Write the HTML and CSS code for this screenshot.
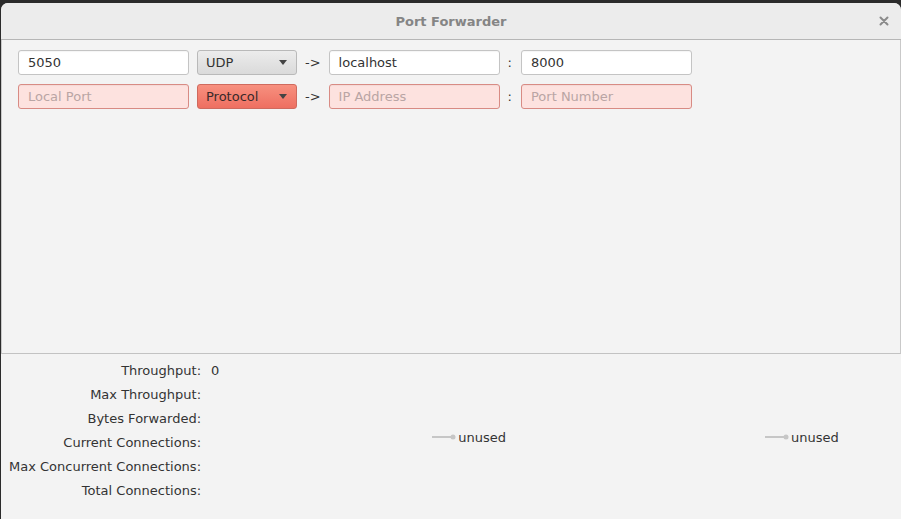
FILE: index.html
```html
<!DOCTYPE html>
<html>
<head>
<meta charset="utf-8">
<link rel="stylesheet" href="styles.css">
</head>
<body>
<div class="window">
  <div class="titlebar">
    <div></div>
    <div class="title">Port Forwarder</div>
    <div class="close-wrap">
      <svg class="close" width="10" height="10" viewBox="0 0 10 10"><path d="M1.5 1.5 L8.5 8.5 M8.5 1.5 L1.5 8.5" stroke="#8a8a8a" stroke-width="2" stroke-linecap="round"/></svg>
    </div>
  </div>
  <div class="panel">
    <div class="row">
      <div class="field">5050</div>
      <div class="combo"><span>UDP</span><span class="arrow"></span></div>
      <div class="sep">-&gt;</div>
      <div class="field">localhost</div>
      <div class="sep colon">:</div>
      <div class="field">8000</div>
    </div>
    <div class="row">
      <div class="field error placeholder">Local Port</div>
      <div class="combo combo-error"><span>Protocol</span><span class="arrow"></span></div>
      <div class="sep">-&gt;</div>
      <div class="field error placeholder">IP Address</div>
      <div class="sep colon">:</div>
      <div class="field error placeholder">Port Number</div>
    </div>
  </div>
  <div class="bottom">
    <div class="stats">
      <div class="label">Throughput:</div><div class="value">0</div>
      <div class="label">Max Throughput:</div><div class="value"></div>
      <div class="label">Bytes Forwarded:</div><div class="value"></div>
      <div class="label">Current Connections:</div><div class="value"></div>
      <div class="label">Max Concurrent Connections:</div><div class="value"></div>
      <div class="label">Total Connections:</div><div class="value"></div>
    </div>
    <div class="charts">
      <div class="legend legend-1">
        <svg width="25" height="8" viewBox="0 0 25 8"><line x1="0" y1="4" x2="19" y2="4" stroke="#c6c6c6" stroke-width="2"/><circle cx="21" cy="4" r="2.5" fill="#c6c6c6"/></svg>
        <span>unused</span>
      </div>
      <div class="legend legend-2">
        <svg width="25" height="8" viewBox="0 0 25 8"><line x1="0" y1="4" x2="19" y2="4" stroke="#c6c6c6" stroke-width="2"/><circle cx="21" cy="4" r="2.5" fill="#c6c6c6"/></svg>
        <span>unused</span>
      </div>
    </div>
  </div>
</div>
</body>
</html>
```
FILE: styles.css
```css
html, body {
  margin: 0;
  padding: 0;
}
body {
  background: #2b2b2b;
  width: 901px;
  height: 519px;
  overflow: hidden;
  font-family: "DejaVu Sans", sans-serif;
  font-size: 13px;
  color: #333333;
}
.window {
  margin: 3px 0 0 1px;
  width: 900px;
  height: 520px;
  background: #f3f3f3;
  border-radius: 7px 7px 0 0;
  display: flex;
  flex-direction: column;
  overflow: hidden;
}
.titlebar {
  height: 36px;
  flex: none;
  background: #ececec;
  border-bottom: 1px solid #b6b6b6;
  display: grid;
  grid-template-columns: 1fr auto 1fr;
  align-items: center;
}
.title {
  font-weight: bold;
  color: #858585;
  font-size: 13px;
  padding-top: 1px;
}
.close-wrap {
  display: flex;
  justify-content: flex-end;
  padding-right: 12px;
}
.close {
  display: block;
}
.panel {
  height: 303px;
  flex: none;
  padding: 10px 0 0 16px;
  border-left: 1px solid #c9c9c9;
  border-right: 1px solid #c9c9c9;
  border-bottom: 1px solid #c2c2c2;
  display: flex;
  flex-direction: column;
  gap: 9px;
}
.row {
  display: flex;
  align-items: center;
  gap: 8px;
  height: 25px;
}
.field {
  box-sizing: border-box;
  width: 171px;
  height: 25px;
  background: #ffffff;
  border: 1px solid #c4c4c4;
  border-radius: 3px;
  padding: 0 9px;
  line-height: 23px;
  color: #333333;
  box-shadow: inset 0 1px 1px rgba(0,0,0,0.04);
}
.field.error {
  background: #fde2df;
  border-color: #d88b84;
}
.placeholder {
  color: #b9a5a4;
}
.combo {
  box-sizing: border-box;
  width: 100px;
  height: 25px;
  border: 1px solid #b9b9b9;
  border-radius: 3px;
  background: linear-gradient(#ececec, #dadada);
  display: flex;
  align-items: center;
  justify-content: space-between;
  padding: 0 9px 0 8px;
  color: #333333;
}
.combo-error {
  background: linear-gradient(#f7907f, #ee6f61);
  border-color: #cf6a5e;
  color: #3a2a2a;
}
.arrow {
  width: 0;
  height: 0;
  border-left: 4px solid transparent;
  border-right: 4px solid transparent;
  border-top: 5px solid #444444;
}
.sep {
  color: #333333;
}
.colon {
  margin-right: 1px;
}
.bottom {
  flex: 1;
  display: flex;
  align-items: stretch;
}
.stats {
  display: grid;
  grid-template-columns: auto auto;
  grid-auto-rows: 24px;
  column-gap: 10px;
  align-items: center;
  align-content: start;
  padding: 4px 0 0 8px;
}
.label {
  text-align: right;
}
.charts {
  flex: 1;
  display: flex;
  align-items: center;
  padding-bottom: 3px;
}
.legend {
  display: flex;
  align-items: center;
  gap: 1px;
}
.legend svg {
  display: block;
}
.legend-1 {
  margin-left: 213px;
}
.legend-2 {
  margin-left: 259px;
}
```
